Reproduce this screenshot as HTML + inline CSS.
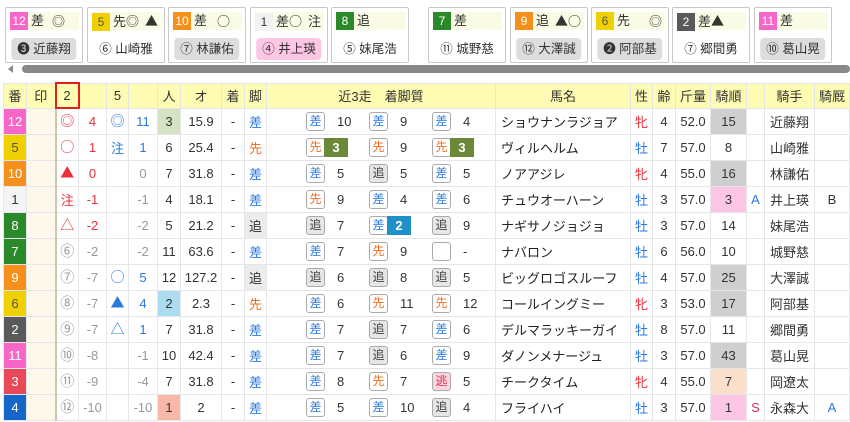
<!DOCTYPE html>
<html><head><meta charset="utf-8"><style>
*{box-sizing:border-box;margin:0;padding:0}
body{width:850px;height:422px;overflow:hidden;background:#fff;font-family:"Liberation Sans","Noto Sans CJK JP",sans-serif;font-size:13px;color:#333;position:relative}
.card{position:absolute;top:7px;width:78px;height:56px;border:1px solid #c8c8c8;border-radius:2px;background:#fff}
.card .top{position:absolute;left:4px;top:4px;width:69px;height:18px;background:#fafbe4;font-size:13px;line-height:18px}
.card .n{display:inline-block;width:18px;height:18px;text-align:center;color:#fff;margin-right:3px;font-size:12px}
.card .mk{position:absolute;right:3px;top:0;font-family:"Noto Sans CJK JP",sans-serif;font-size:13px}
.cj{font-family:"Noto Sans CJK JP",sans-serif}
.card .pill{position:absolute;left:50%;transform:translateX(-50%);top:30px;height:22px;line-height:22px;padding:0 6px;border-radius:4px;font-size:12.5px;white-space:nowrap;color:#333}
.g{background:#ddd}.pk{background:#fcc6e4}
.sb{position:absolute;left:22px;top:65px;width:828px;height:8px;background:#888;border-radius:4px}
.arr{position:absolute;left:8px;top:65px;width:0;height:0;border-top:4px solid transparent;border-bottom:4px solid transparent;border-right:5px solid #888}
table{position:absolute;left:3px;top:82px;border-collapse:collapse;table-layout:fixed;width:846px}
td,th{border:1px solid #e4e6ea;height:26px;text-align:center;white-space:nowrap;overflow:hidden;font-weight:normal;padding:0}
th{background:#fdfcb2;height:25px;font-size:13px;color:#333}
.r{color:#e8303a}.b{color:#2a78e0}.gy{color:#999}.o{color:#f07020}
.m{font-family:"Noto Sans CJK JP",sans-serif;font-size:14px}
.num{color:#fff}
.cream{background:#fdf8ea;border-right:2px solid #ccc5b0}
.bd{display:inline-block;width:19px;height:19px;line-height:17px;border:1px solid #aaa;border-radius:3px;font-size:12px;vertical-align:middle;background:#fff;text-align:center}
.bd.t{background:#e6e6e6;color:#444}
.bd.e{background:#fcd6dc;color:#e03050}
.rk{display:inline-block;width:24px;height:19px;line-height:19px;color:#fff;font-weight:bold;vertical-align:middle;margin-left:-1px;text-align:center}
.rc{text-align:left;padding-left:39px}
.rc span.v{display:inline-block;width:44px;padding-left:12px;text-align:left;vertical-align:middle}
.sp{display:inline-block;width:21px}
.nm{text-align:left;padding-left:5px;color:#222}
</style></head><body>

<div class="card" style="left:5px"><div class="top"><span class="n" style="background:#f866c8">12</span>差<span class="mk" style="right:14px">◎</span></div><div class="pill g">❸ 近藤翔</div></div>
<div class="card" style="left:87px"><div class="top"><span class="n" style="background:#f0d000;color:#555">5</span>先<span class="cj">◎</span><span class="mk">▲</span></div><div class="pill">⑥ 山崎雅</div></div>
<div class="card" style="left:168px"><div class="top"><span class="n" style="background:#f6901c">10</span>差<span class="mk" style="right:12px">○</span></div><div class="pill g">⑦ 林謙佑</div></div>
<div class="card" style="left:250px"><div class="top"><span class="n" style="background:#f2f2f2;color:#333">1</span>差<span class="cj">○</span><span class="mk">注</span></div><div class="pill pk">④ 井上瑛</div></div>
<div class="card" style="left:331px"><div class="top"><span class="n" style="background:#2a8a2a">8</span>追</div><div class="pill">⑤ 妹尾浩</div></div>
<div class="card" style="left:428px"><div class="top"><span class="n" style="background:#2a8a2a">7</span>差</div><div class="pill">⑪ 城野慈</div></div>
<div class="card" style="left:510px"><div class="top"><span class="n" style="background:#f6901c">9</span>追<span class="mk">▲○</span></div><div class="pill g">⑫ 大澤誠</div></div>
<div class="card" style="left:591px"><div class="top"><span class="n" style="background:#f0d000;color:#555">6</span>先<span class="mk">◎</span></div><div class="pill g">❷ 阿部基</div></div>
<div class="card" style="left:672px"><div class="top"><span class="n" style="background:#5a5a5a">2</span>差<span class="cj">▲</span></div><div class="pill">⑦ 郷間勇</div></div>
<div class="card" style="left:754px"><div class="top"><span class="n" style="background:#f866c8">11</span>差</div><div class="pill g">⑩ 葛山晃</div></div>

<div class="arr"></div><div class="sb"></div>

<table>
<colgroup><col style="width:23px"><col style="width:29px"><col style="width:23px"><col style="width:28px"><col style="width:22px"><col style="width:29px"><col style="width:23px"><col style="width:41px"><col style="width:23px"><col style="width:22px"><col style="width:229px"><col style="width:135px"><col style="width:22px"><col style="width:23px"><col style="width:35px"><col style="width:36px"><col style="width:18px"><col style="width:50px"><col style="width:35px"></colgroup>
<tr><th>番</th><th>印</th><th style="border:2px solid #e02020">2</th><th></th><th>5</th><th></th><th>人</th><th>オ</th><th>着</th><th>脚</th><th>近3走　着脚質</th><th>馬名</th><th>性</th><th>齢</th><th>斤量</th><th>騎順</th><th></th><th>騎手</th><th>騎厩</th></tr>
<tr><td class="num" style="background:#f866c8">12</td><td class="cream"></td><td class="r m">◎</td><td class="r">4</td><td class="b m">◎</td><td class="b">11</td><td style="background:#d6e2c4">3</td><td>15.9</td><td>-</td><td class="b">差</td>
<td class="rc"><span class="bd b">差</span><span class="v">10</span><span class="bd b">差</span><span class="v">9</span><span class="bd b">差</span><span class="v">4</span></td><td class="nm">ショウナンラジョア</td><td class="r">牝</td><td>4</td><td>52.0</td><td style="background:#cfcfcf">15</td><td></td><td>近藤翔</td><td></td></tr>
<tr><td style="background:#f0d000;color:#555">5</td><td class="cream"></td><td class="r m">○</td><td class="r">1</td><td class="b">注</td><td class="b">1</td><td>6</td><td>25.4</td><td>-</td><td class="o">先</td>
<td class="rc"><span class="bd o">先</span><span class="rk" style="background:#6a8a3a">3</span><span class="sp"></span><span class="bd o">先</span><span class="v">9</span><span class="bd o">先</span><span class="rk" style="background:#6a8a3a">3</span></td><td class="nm">ヴィルヘルム</td><td class="b">牡</td><td>7</td><td>57.0</td><td>8</td><td></td><td>山崎雅</td><td></td></tr>
<tr><td class="num" style="background:#f6901c">10</td><td class="cream"></td><td class="r m">▲</td><td class="r">0</td><td></td><td class="gy">0</td><td>7</td><td>31.8</td><td>-</td><td class="b">差</td>
<td class="rc"><span class="bd b">差</span><span class="v">5</span><span class="bd t">追</span><span class="v">5</span><span class="bd b">差</span><span class="v">5</span></td><td class="nm">ノアアジレ</td><td class="r">牝</td><td>4</td><td>55.0</td><td style="background:#cfcfcf">16</td><td></td><td>林謙佑</td><td></td></tr>
<tr><td style="background:#f4f4f4">1</td><td class="cream"></td><td class="r">注</td><td class="r">-1</td><td></td><td class="gy">-1</td><td>4</td><td>18.1</td><td>-</td><td class="b">差</td>
<td class="rc"><span class="bd o">先</span><span class="v">9</span><span class="bd b">差</span><span class="v">4</span><span class="bd b">差</span><span class="v">6</span></td><td class="nm">チュウオーハーン</td><td class="b">牡</td><td>3</td><td>57.0</td><td style="background:#fcc6e4">3</td><td class="b">A</td><td>井上瑛</td><td>B</td></tr>
<tr><td class="num" style="background:#2a8a2a">8</td><td class="cream"></td><td class="r m">△</td><td class="r">-2</td><td></td><td class="gy">-2</td><td>5</td><td>21.2</td><td>-</td><td style="background:#ececec">追</td>
<td class="rc"><span class="bd t">追</span><span class="v">7</span><span class="bd b">差</span><span class="rk" style="background:#2090c8">2</span><span class="sp"></span><span class="bd t">追</span><span class="v">9</span></td><td class="nm">ナギサノジョジョ</td><td class="b">牡</td><td>3</td><td>57.0</td><td>14</td><td></td><td>妹尾浩</td><td></td></tr>
<tr><td class="num" style="background:#2a8a2a">7</td><td class="cream"></td><td class="gy m">⑥</td><td class="gy">-2</td><td></td><td class="gy">-2</td><td>11</td><td>63.6</td><td>-</td><td class="b">差</td>
<td class="rc"><span class="bd b">差</span><span class="v">7</span><span class="bd o">先</span><span class="v">9</span><span class="bd"></span><span class="v">-</span></td><td class="nm">ナバロン</td><td class="b">牡</td><td>6</td><td>56.0</td><td>10</td><td></td><td>城野慈</td><td></td></tr>
<tr><td class="num" style="background:#f6901c">9</td><td class="cream"></td><td class="gy m">⑦</td><td class="gy">-7</td><td class="b m">○</td><td class="b">5</td><td>12</td><td>127.2</td><td>-</td><td style="background:#ececec">追</td>
<td class="rc"><span class="bd t">追</span><span class="v">6</span><span class="bd t">追</span><span class="v">8</span><span class="bd t">追</span><span class="v">5</span></td><td class="nm">ビッグロゴスルーフ</td><td class="b">牡</td><td>4</td><td>57.0</td><td style="background:#cfcfcf">25</td><td></td><td>大澤誠</td><td></td></tr>
<tr><td style="background:#f0d000;color:#555">6</td><td class="cream"></td><td class="gy m">⑧</td><td class="gy">-7</td><td class="b m">▲</td><td class="b">4</td><td style="background:#acdcf0">2</td><td>2.3</td><td>-</td><td class="o">先</td>
<td class="rc"><span class="bd b">差</span><span class="v">6</span><span class="bd o">先</span><span class="v">11</span><span class="bd o">先</span><span class="v">12</span></td><td class="nm">コールイングミー</td><td class="r">牝</td><td>3</td><td>53.0</td><td style="background:#cfcfcf">17</td><td></td><td>阿部基</td><td></td></tr>
<tr><td class="num" style="background:#5a5a5a">2</td><td class="cream"></td><td class="gy m">⑨</td><td class="gy">-7</td><td class="b m">△</td><td class="b">1</td><td>7</td><td>31.8</td><td>-</td><td class="b">差</td>
<td class="rc"><span class="bd b">差</span><span class="v">7</span><span class="bd t">追</span><span class="v">7</span><span class="bd b">差</span><span class="v">6</span></td><td class="nm">デルマラッキーガイ</td><td class="b">牡</td><td>8</td><td>57.0</td><td>11</td><td></td><td>郷間勇</td><td></td></tr>
<tr><td class="num" style="background:#f866c8">11</td><td class="cream"></td><td class="gy m">⑩</td><td class="gy">-8</td><td></td><td class="gy">-1</td><td>10</td><td>42.4</td><td>-</td><td class="b">差</td>
<td class="rc"><span class="bd b">差</span><span class="v">7</span><span class="bd t">追</span><span class="v">6</span><span class="bd b">差</span><span class="v">9</span></td><td class="nm">ダノンメナージュ</td><td class="b">牡</td><td>3</td><td>57.0</td><td style="background:#cfcfcf">43</td><td></td><td>葛山晃</td><td></td></tr>
<tr><td class="num" style="background:#e84858">3</td><td class="cream"></td><td class="gy m">⑪</td><td class="gy">-9</td><td></td><td class="gy">-4</td><td>7</td><td>31.8</td><td>-</td><td class="b">差</td>
<td class="rc"><span class="bd b">差</span><span class="v">8</span><span class="bd o">先</span><span class="v">7</span><span class="bd e">逃</span><span class="v">5</span></td><td class="nm">チークタイム</td><td class="r">牝</td><td>4</td><td>55.0</td><td style="background:#fde0cc">7</td><td></td><td>岡遼太</td><td></td></tr>
<tr><td class="num" style="background:#1466c8">4</td><td class="cream"></td><td class="gy m">⑫</td><td class="gy">-10</td><td></td><td class="gy">-10</td><td style="background:#f8b8a8">1</td><td>2</td><td>-</td><td class="b">差</td>
<td class="rc"><span class="bd b">差</span><span class="v">5</span><span class="bd b">差</span><span class="v">10</span><span class="bd t">追</span><span class="v">4</span></td><td class="nm">フライハイ</td><td class="b">牡</td><td>3</td><td>57.0</td><td style="background:#fcc6e4">1</td><td style="color:#d0306a">S</td><td>永森大</td><td class="b">A</td></tr>
</table>
</body></html>
